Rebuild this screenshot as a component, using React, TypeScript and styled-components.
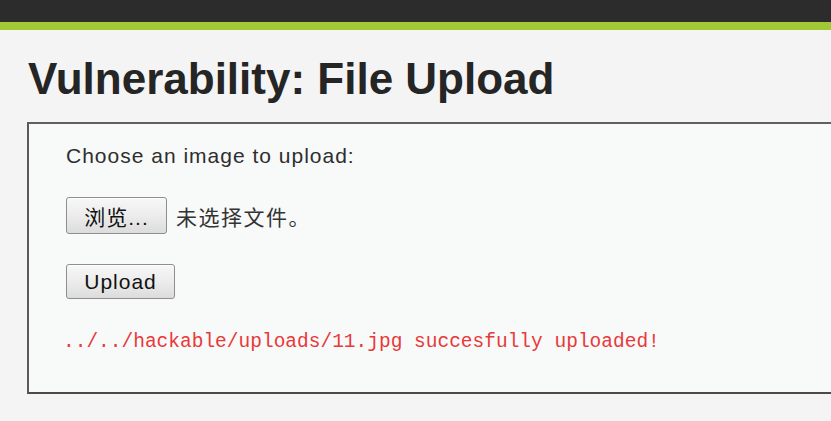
import React from 'react';
import styled, { createGlobalStyle } from 'styled-components';

const GlobalStyle = createGlobalStyle`
  html, body {
    margin: 0;
    padding: 0;
    background-color: #f4f4f4;
    overflow: hidden;
  }
  body {
    font-family: "Liberation Sans", Arial, "Noto Sans CJK SC", sans-serif;
    color: #2b2b2b;
  }
`;

const TopBar = styled.header`
  height: 22px;
  background-color: #2c2c2c;
  border-bottom: 8px solid #a0c935;
`;

const Main = styled.main`
  padding: 24px 0 0 27px;
`;

const Title = styled.h1`
  margin: 0 0 18px 1px;
  font-size: 44px;
  line-height: 50px;
  font-weight: bold;
  color: #252525;
`;

const Panel = styled.div`
  width: 860px;
  box-sizing: border-box;
  background-color: #f8f9f9;
  border: 2px solid #5a5a5a;
  border-top-color: #606060;
  border-bottom-color: #4a4a4a;
  padding: 20px 0 39px 37px;
`;

const Label = styled.p`
  margin: 0 0 29px;
  font-size: 21px;
  line-height: 24px;
  letter-spacing: 1px;
  color: #2e2e2e;
`;

const FileRow = styled.div`
  display: flex;
  align-items: center;
  gap: 9px;
  margin-bottom: 30px;
`;

const Button = styled.button<{ $width: number; $height: number }>`
  width: ${(p) => p.$width}px;
  height: ${(p) => p.$height}px;
  padding: 0;
  display: flex;
  align-items: center;
  justify-content: center;
  font-family: "Liberation Sans", Arial, "Noto Sans CJK SC", sans-serif;
  font-size: 21px;
  letter-spacing: 1px;
  color: #111;
  background: linear-gradient(to bottom, #f7f7f7 0%, #ececec 50%, #dcdcdc 100%);
  border: 1px solid #8e8e8e;
  border-radius: 3px;
  box-shadow: inset 0 1px 0 #ffffff;
`;

const NoFile = styled.span`
  font-size: 21px;
  letter-spacing: 1.5px;
  color: #333;
`;

const Result = styled.pre`
  margin: 32px 0 0 -3px;
  font-family: "Liberation Mono", "Courier New", monospace;
  font-size: 19.5px;
  line-height: 22px;
  color: #e8393a;
`;

const App: React.FC = () => {
  return (
    <>
      <GlobalStyle />
      <TopBar />
      <Main>
        <Title>Vulnerability: File Upload</Title>
        <Panel>
          <Label>Choose an image to upload:</Label>
          <FileRow>
            <Button $width={101} $height={37}>浏览...</Button>
            <NoFile>未选择文件。</NoFile>
          </FileRow>
          <Button $width={109} $height={35}>Upload</Button>
          <Result>../../hackable/uploads/11.jpg succesfully uploaded!</Result>
        </Panel>
      </Main>
    </>
  );
};

export default App;
